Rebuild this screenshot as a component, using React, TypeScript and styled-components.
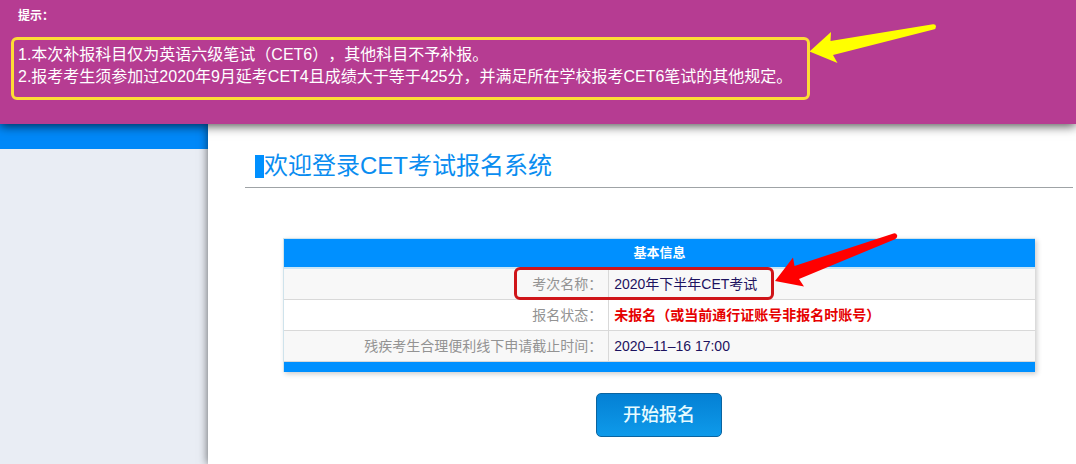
import React from "react";
import styled, { createGlobalStyle } from "styled-components";

const GlobalStyle = createGlobalStyle`
  * { box-sizing: border-box; }
  body {
    margin: 0;
    background: #fff;
    font-family: "Liberation Sans", "Noto Sans CJK SC", sans-serif;
    text-spacing-trim: space-all;
  }
`;

const Page = styled.div`
  display: flex;
  flex-direction: column;
  min-height: 100vh;
  overflow-x: hidden;
`;

const Notice = styled.header`
  position: relative;
  z-index: 2;
  padding: 8px 11px 24px;
  background: #b63c92;
  color: #fff;
  box-shadow: 0 2px 10px rgba(0, 0, 0, 0.7);
`;

const NoticeTitle = styled.h2`
  margin: 0 0 13px;
  padding-left: 7px;
  font-size: 12px;
  line-height: 16px;
`;

const NoticeBox = styled.div`
  position: relative;
  width: fit-content;
  padding: 4px 15px 9px 4px;
  border: 3px solid #fddc35;
  border-radius: 6px;
`;

const NoticeList = styled.ol`
  margin: 0;
  padding: 0;
  list-style: none;
  font-size: 16px;
  line-height: 22px;
`;

const YellowArrow = styled.svg`
  position: absolute;
  left: 100%;
  top: -16px;
  width: 130px;
  height: 42px;
`;

const Body = styled.div`
  display: flex;
  flex: 1;
`;

const Sidebar = styled.aside`
  flex: 0 0 208px;
  background: #e9edf4;
`;

const SidebarBar = styled.div`
  height: 25px;
  background: #0088f8;
`;

const Main = styled.main`
  position: relative;
  flex: 1;
  min-width: 0;
  padding: 24px 3px 24px 37px;
  background: #fff;
  box-shadow: 0 0 9px rgba(0, 0, 0, 0.6);
`;

const Heading = styled.h1`
  display: flex;
  align-items: center;
  margin: 0 0 50px;
  padding: 0 0 3px 10px;
  height: 40px;
  border-bottom: 1px solid #9fa3a6;
  color: #0a8df0;
  font-size: 24px;
  line-height: 36px;
  font-weight: 400;

  &::before {
    content: "";
    width: 9px;
    height: 23px;
    background: #0090ff;
  }
`;

const InfoTable = styled.table`
  width: calc(100% - 76px);
  margin: 0 38px 21px;
  table-layout: fixed;
  border-collapse: separate;
  border-spacing: 0;
  border: 1px solid #cfe3ec;
  border-right-width: 0;
  border-bottom-width: 0;
  box-shadow: 2px 2px 5px rgba(0, 0, 0, 0.2);
  font-size: 14px;
  line-height: 20px;
`;

const TableTitle = styled.th`
  height: 30px;
  padding: 0;
  border-bottom: 2px solid #cbe6f6;
  background: #0090ff;
  color: #fff;
  font-size: 13px;
`;

const InfoRow = styled.tr`
  background: #fff;

  &:nth-child(odd) {
    background: #f8f8f8;
  }
`;

const Label = styled.th`
  height: 31px;
  padding: 0 6px 0 0;
  border-right: 1px solid #d9d9d9;
  border-bottom: 1px solid #d9d9d9;
  color: #939393;
  font-weight: 400;
  text-align: right;
`;

const Value = styled.td<{ $alert?: boolean }>`
  position: relative;
  padding: 0 0 0 5px;
  border-bottom: 1px solid #d9d9d9;
  color: ${(p) => (p.$alert ? "#e60000" : "#1d1360")};
  font-weight: ${(p) => (p.$alert ? 700 : 400)};
`;

const TableFoot = styled.td`
  height: 10px;
  padding: 0;
  background: #0090ff;
`;

const RedFrame = styled.span`
  position: absolute;
  left: -95px;
  top: -2px;
  width: 260px;
  height: 33px;
  border: 3px solid #cf1519;
  border-radius: 6px;
`;

const RedArrow = styled.svg`
  position: absolute;
  left: calc(100% + 4px);
  top: -37px;
  width: 124px;
  height: 58px;
`;

const StartButton = styled.button`
  display: block;
  margin: 0 auto;
  width: 126px;
  height: 44px;
  padding: 0;
  border: 1px solid #0a64a0;
  border-radius: 5px;
  background: linear-gradient(#0480d4, #0e9aea);
  color: #e6fbff;
  font-family: inherit;
  font-size: 18px;
  line-height: 26px;
  font-weight: 500;
  cursor: pointer;
`;

const notices = [
  "1.本次补报科目仅为英语六级笔试（CET6），其他科目不予补报。",
  "2.报考考生须参加过2020年9月延考CET4且成绩大于等于425分，并满足所在学校报考CET6笔试的其他规定。",
];

const rows = [
  { label: "考次名称：", value: "2020年下半年CET考试", framed: true },
  { label: "报名状态：", value: "未报名（或当前通行证账号非报名时账号）", alert: true },
  { label: "残疾考生合理便利线下申请截止时间：", value: "2020–11–16 17:00" },
];

export default function App() {
  return (
    <>
      <GlobalStyle />
      <Page lang="zh-CN">
        <Notice>
          <NoticeTitle>提示：</NoticeTitle>
          <NoticeBox>
            <NoticeList>
              {notices.map((text) => (
                <li key={text}>{text}</li>
              ))}
            </NoticeList>
            <YellowArrow viewBox="0 0 130 42" aria-hidden="true">
              <path
                fill="#ffff00"
                d="M2.5 27.5 L24 8 L23.5 17 L126 0.2 Q129 0 129 2.5 Q129 5 126.5 5.6 L26 31 L30.5 39 Z"
              />
            </YellowArrow>
          </NoticeBox>
        </Notice>
        <Body>
          <Sidebar>
            <SidebarBar />
          </Sidebar>
          <Main>
            <Heading>欢迎登录CET考试报名系统</Heading>
            <InfoTable>
              <colgroup>
                <col style={{ width: "43.3%" }} />
                <col />
              </colgroup>
              <thead>
                <tr>
                  <TableTitle colSpan={2}>基本信息</TableTitle>
                </tr>
              </thead>
              <tbody>
                {rows.map((row) => (
                  <InfoRow key={row.label}>
                    <Label scope="row">{row.label}</Label>
                    <Value $alert={row.alert}>
                      {row.value}
                      {row.framed && (
                        <RedFrame>
                          <RedArrow viewBox="0 0 124 58" aria-hidden="true">
                            <path
                              fill="#ff0000"
                              d="M0 48 L18 24.5 L19.5 33 L118.5 0.4 Q121.5 0 122.2 2.4 Q122.6 5 120 6.2 L24 46 L29 53.5 Z"
                            />
                          </RedArrow>
                        </RedFrame>
                      )}
                    </Value>
                  </InfoRow>
                ))}
              </tbody>
              <tfoot>
                <tr>
                  <TableFoot colSpan={2} />
                </tr>
              </tfoot>
            </InfoTable>
            <StartButton type="button">开始报名</StartButton>
          </Main>
        </Body>
      </Page>
    </>
  );
}
